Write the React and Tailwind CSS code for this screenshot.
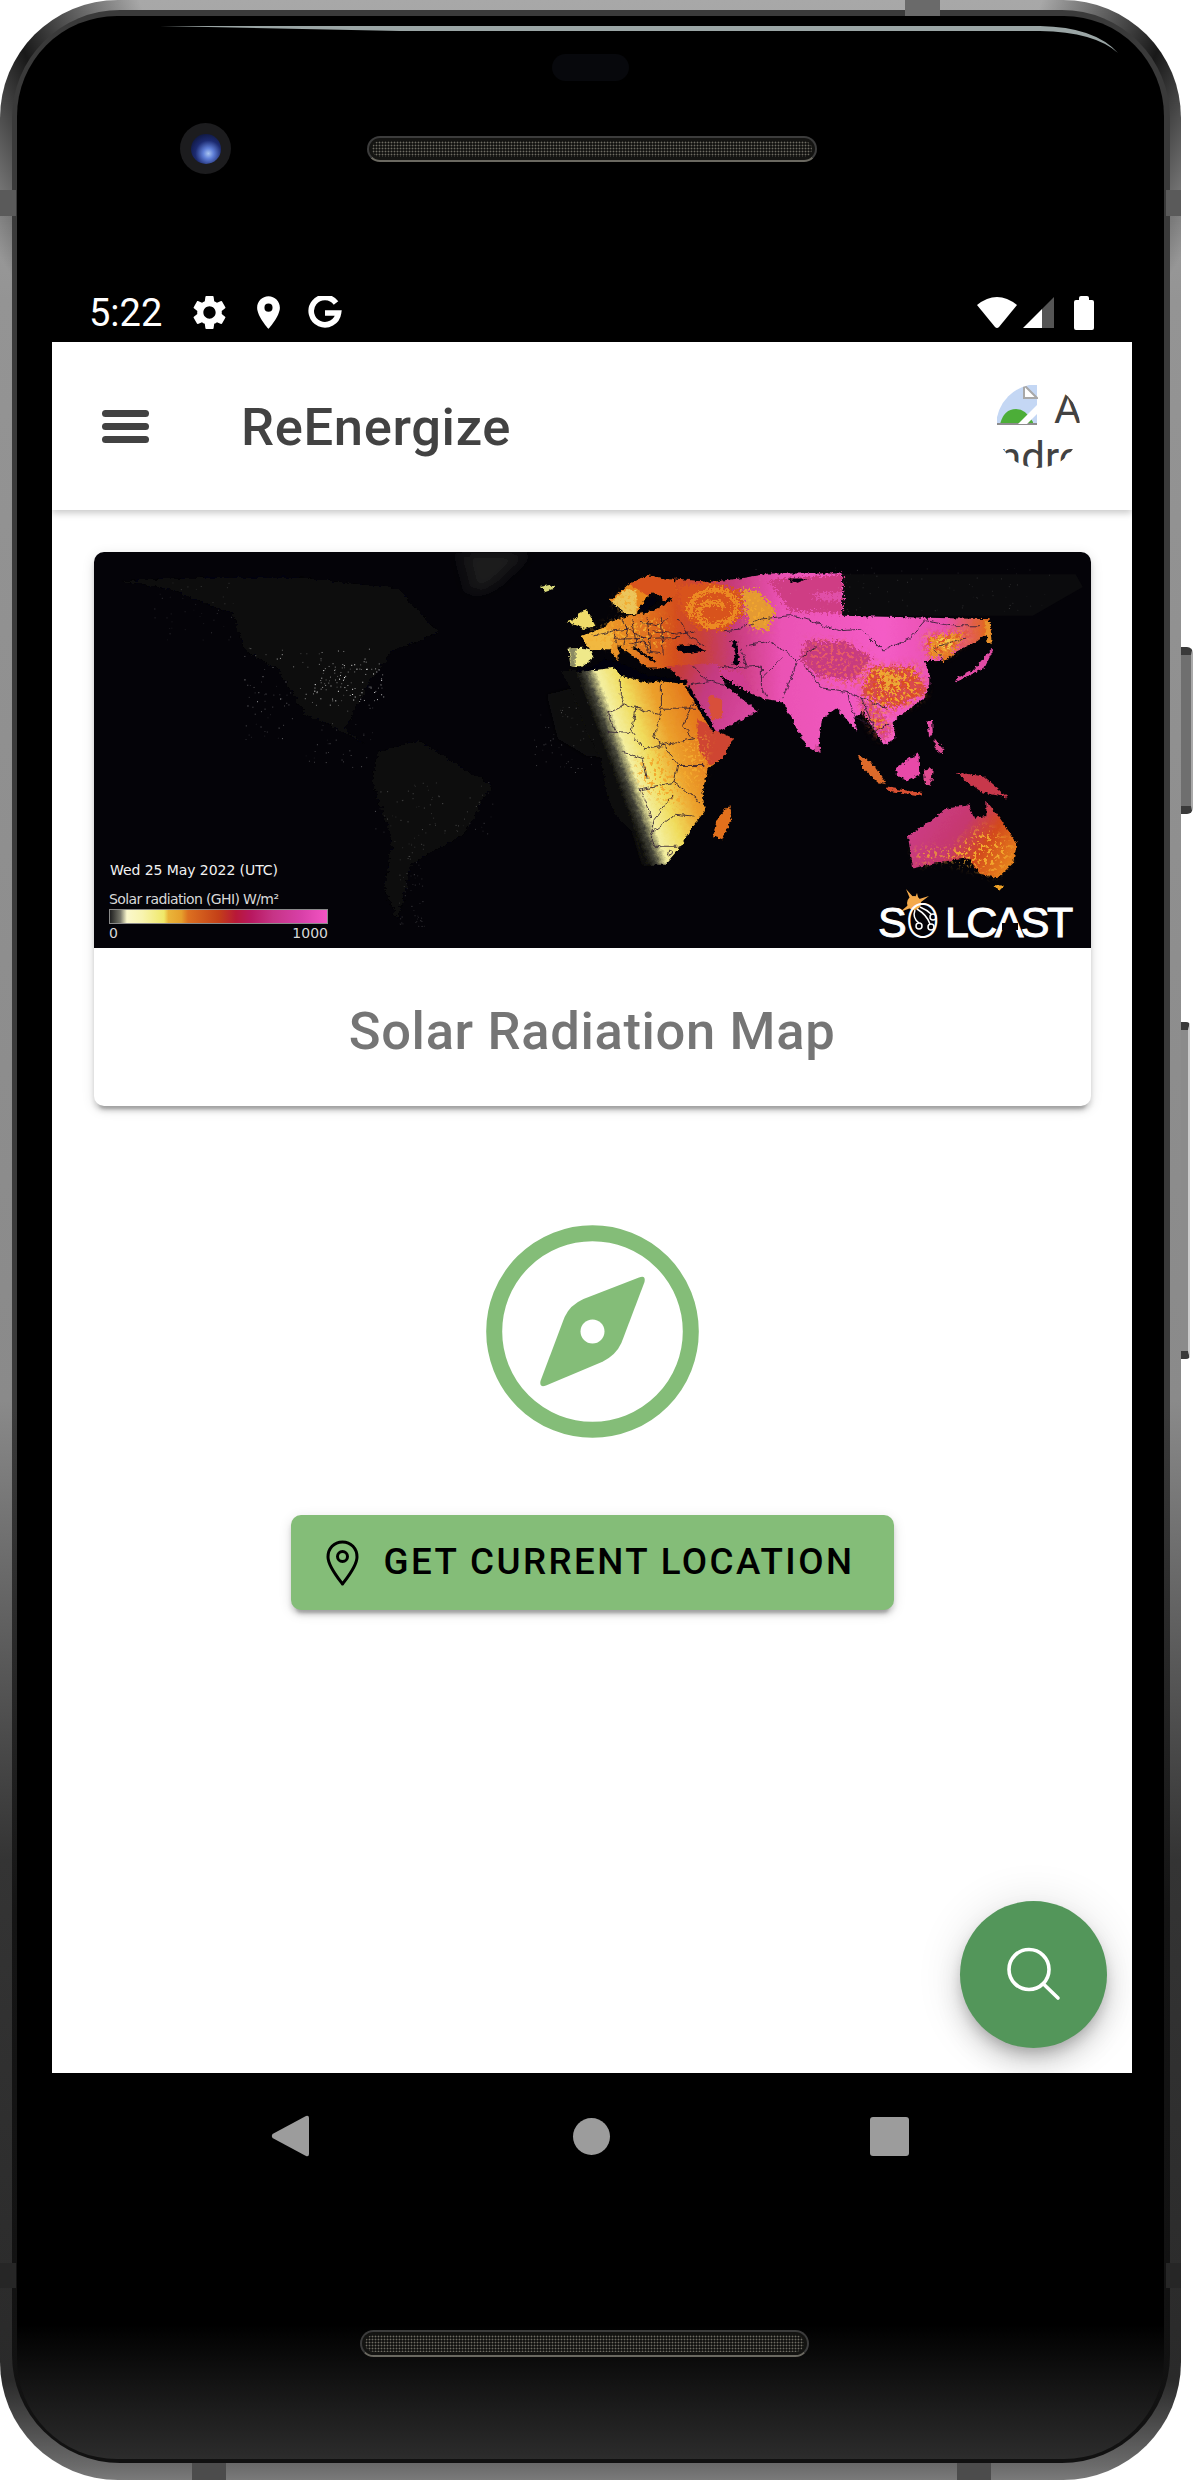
import React, { useMemo } from "react";
import { MdSettings, MdLocationOn } from "react-icons/md";

function rng(seed) {
  let s = seed;
  return () => {
    s = (s * 16807) % 2147483647;
    return (s - 1) / 2147483646;
  };
}

const EURASIA = "380,85 470,95 560,85 640,70 846,70 846,195 1240,205 1255,205 1265,240 1225,270 1150,310 1130,330 1075,330 1090,365 1090,400 1075,440 1010,490 990,510 995,560 965,578 930,520 905,480 880,500 890,540 830,470 790,500 778,600 745,580 710,510 680,450 625,442 590,425 540,392 505,365 495,340 420,350 360,352 300,352 270,322 220,282 220,330 190,290 140,295 140,255 115,255 170,235 205,208 320,180 370,150";
const AFRICA = "60,360 140,352 215,345 235,375 300,395 340,390 415,400 430,440 480,520 485,545 540,560 510,620 470,650 455,720 462,775 420,830 395,880 350,935 290,935 270,850 215,790 190,740 170,620 130,540 90,420";
const ARABIA = "355,345 495,335 520,405 585,458 610,478 490,545 480,510 420,420 410,395";
const AUS = "1030,850 1100,800 1135,770 1200,755 1215,795 1250,790 1250,745 1290,800 1335,870 1325,930 1280,975 1230,960 1200,915 1130,925 1045,945 1035,880";
const SCAND = "195,150 250,100 300,75 375,90 385,130 350,150 320,125 300,135 270,190 240,190 215,165";
const IBERIA = "80,293 120,290 140,295 150,320 115,350 85,345";

const BORDERS = [
  "225,385 225,430 240,460 190,485", "240,460 335,490", "340,395 340,470 335,490 320,560 345,580", "340,470 435,470",
  "270,465 255,540 290,590 345,580 430,560", "190,540 255,545", "230,600 290,620 300,680", "345,580 385,640 375,690 280,710 310,790",
  "385,640 460,640", "375,690 450,750", "370,730 320,800 310,840 380,785 430,790", "310,840 320,880 395,880",
  "510,240 560,235 620,205 700,195 760,210 840,240 900,235 960,300 1040,260 1080,210 1150,225 1230,225",
  "580,285 640,270 700,310 720,330 770,290", "500,345 540,350 620,345 620,410 635,440", "620,380 680,320", "680,440 710,360 720,335",
  "740,340 790,410 860,420 900,440 970,470", "420,400 480,390 520,400", "430,345 470,390", "205,240 250,235 290,260", "260,205 270,290",
  "300,200 310,300", "340,200 345,310", "210,265 390,260", "860,420 880,500 930,520", "900,440 940,540 975,520", "1130,330 1100,290 1190,265",
  "150,255 205,240 215,280", "230,205 245,240 235,280", "280,215 330,225 365,200", "290,260 300,300 335,305", "315,240 385,250 430,240",
  "390,205 420,260 460,285", "250,280 285,270 310,290", "560,290 580,345", "430,450 400,520 430,560", "190,485 215,540",
];

function WorldMap() {
  const dots = useMemo(() => {
    const r = rng(12345);
    const out = [];
    const add = (n, x0, x1, y0, y1, a) => {
      for (let i = 0; i < n; i++) {
        out.push({ x: x0 + r() * (x1 - x0), y: y0 + r() * (y1 - y0), o: a * (0.25 + r() * 0.75) });
      }
    };
    add(80, 150, 285, 95, 160, 0.65);
    add(30, 150, 200, 130, 190, 0.4);
    add(80, 220, 290, 110, 150, 1);
    add(40, 60, 140, 30, 90, 0.2);
    add(70, 280, 400, 230, 290, 0.3);
    add(60, 305, 330, 290, 375, 0.25);
    add(30, 210, 280, 170, 215, 0.35);
    add(90, 660, 960, 15, 60, 0.18);
    add(50, 440, 500, 150, 220, 0.3);
    return out;
  }, []);
  const B = "translate(446,-2) scale(.3571,.3367)";
  return (
    <svg viewBox="0 0 997 396" width="997" height="396" className="block" style={{ fontFamily: '"DejaVu Sans", sans-serif' }}>
      <defs>
        <filter id="rough" x="-5%" y="-5%" width="110%" height="110%">
          <feTurbulence type="fractalNoise" baseFrequency="0.09" numOctaves="4" seed="7" />
          <feDisplacementMap in="SourceGraphic" scale="14" xChannelSelector="R" yChannelSelector="G" />
        </filter>
        <filter id="rough2" x="-5%" y="-5%" width="110%" height="110%">
          <feTurbulence type="fractalNoise" baseFrequency="0.14" numOctaves="4" seed="21" />
          <feDisplacementMap in="SourceGraphic" scale="40" xChannelSelector="R" yChannelSelector="G" />
        </filter>
        <filter id="wig" x="-5%" y="-5%" width="110%" height="110%">
          <feTurbulence type="fractalNoise" baseFrequency="0.05" numOctaves="3" seed="5" />
          <feDisplacementMap in="SourceGraphic" scale="18" xChannelSelector="R" yChannelSelector="G" />
        </filter>
        <filter id="mottleY" x="0" y="0" width="1" height="1" colorInterpolationFilters="sRGB">
          <feTurbulence type="fractalNoise" baseFrequency="0.3" numOctaves="4" seed="3" />
          <feColorMatrix values="0 0 0 0 0.95  0 0 0 0 0.66  0 0 0 0 0.18  10 0 0 0 -5.5" />
        </filter>
        <filter id="mottleO" x="0" y="0" width="1" height="1" colorInterpolationFilters="sRGB">
          <feTurbulence type="fractalNoise" baseFrequency="0.24" numOctaves="4" seed="9" />
          <feColorMatrix values="0 0 0 0 0.86  0 0 0 0 0.30  0 0 0 0 0.14  10 0 0 0 -5" />
        </filter>
        <filter id="mottleR" x="0" y="0" width="1" height="1" colorInterpolationFilters="sRGB">
          <feTurbulence type="fractalNoise" baseFrequency="0.3" numOctaves="4" seed="11" />
          <feColorMatrix values="0 0 0 0 0.90  0 0 0 0 0.36  0 0 0 0 0.40  10 0 0 0 -5.3" />
        </filter>
        <filter id="blur6"><feGaussianBlur stdDeviation="6" /></filter>
        <filter id="blur14" x="-30%" y="-30%" width="160%" height="160%"><feGaussianBlur stdDeviation="14" /></filter>
        <linearGradient id="gEur" gradientUnits="userSpaceOnUse" x1="100" y1="0" x2="1250" y2="0">
          <stop offset="0" stopColor="#f2b03a" />
          <stop offset="0.12" stopColor="#e88a22" />
          <stop offset="0.24" stopColor="#d5501c" />
          <stop offset="0.31" stopColor="#c8403c" />
          <stop offset="0.38" stopColor="#c63a78" />
          <stop offset="0.5" stopColor="#ea52b4" />
          <stop offset="0.75" stopColor="#f45cc6" />
          <stop offset="0.9" stopColor="#e850ae" />
          <stop offset="1" stopColor="#e0681e" />
        </linearGradient>
        <linearGradient id="gAf" gradientUnits="userSpaceOnUse" x1="120" y1="420" x2="535" y2="275">
          <stop offset="0" stopColor="#0d0d0a" />
          <stop offset="0.06" stopColor="#46463a" />
          <stop offset="0.13" stopColor="#f4efa0" />
          <stop offset="0.26" stopColor="#f0dc5c" />
          <stop offset="0.42" stopColor="#eca02c" />
          <stop offset="0.62" stopColor="#e47a1c" />
          <stop offset="0.85" stopColor="#d4501c" />
          <stop offset="1" stopColor="#c23a3c" />
        </linearGradient>
        <linearGradient id="gAr" gradientUnits="userSpaceOnUse" x1="380" y1="380" x2="620" y2="480">
          <stop offset="0" stopColor="#c43a3a" />
          <stop offset="0.35" stopColor="#c43a80" />
          <stop offset="1" stopColor="#dc4aa6" />
        </linearGradient>
        <linearGradient id="gAu" gradientUnits="userSpaceOnUse" x1="1060" y1="790" x2="1320" y2="960">
          <stop offset="0" stopColor="#cc3c86" />
          <stop offset="0.4" stopColor="#c6386e" />
          <stop offset="0.65" stopColor="#d2481e" />
          <stop offset="1" stopColor="#ea8c1e" />
        </linearGradient>
        <linearGradient id="gBar">
          <stop offset="0" stopColor="#1c1c1c" />
          <stop offset="0.05" stopColor="#77776a" />
          <stop offset="0.08" stopColor="#fbf8cc" />
          <stop offset="0.15" stopColor="#f8f4b0" />
          <stop offset="0.25" stopColor="#f0e868" />
          <stop offset="0.27" stopColor="#eab53a" />
          <stop offset="0.33" stopColor="#e6a02c" />
          <stop offset="0.36" stopColor="#dc7020" />
          <stop offset="0.5" stopColor="#c44018" />
          <stop offset="0.58" stopColor="#b81838" />
          <stop offset="0.65" stopColor="#b81860" />
          <stop offset="0.75" stopColor="#c63486" />
          <stop offset="0.88" stopColor="#d840a8" />
          <stop offset="1" stopColor="#f455c4" />
        </linearGradient>
        <mask id="mChina" maskUnits="userSpaceOnUse" x="0" y="0" width="997" height="396">
          <g transform={B} fill="#fff" filter="url(#blur14)">
            <polygon points="900,350 1060,345 1075,430 985,480 915,440" />
            <polygon points="1075,255 1215,240 1140,305 1085,315" />
            <polygon points="900,450 950,480 980,540 950,555 925,505" />
          </g>
        </mask>
        <mask id="mRuss" maskUnits="userSpaceOnUse" x="0" y="0" width="997" height="396">
          <g transform={B} fill="#fff" filter="url(#blur14)">
            <polygon points="560,115 640,170 640,235 590,235" />
            <polygon points="130,255 210,215 340,200 370,250 335,290 250,285 190,280" />
            <polygon points="210,160 245,120 265,130 260,180 240,185" />
            <polygon points="290,620 470,545 460,650 400,770 310,730 260,650" />
            <polygon points="1240,820 1320,875 1310,925 1270,965 1225,945 1130,915 1060,930 1050,890 1150,890" />
          </g>
        </mask>
        <mask id="mTibet" maskUnits="userSpaceOnUse" x="0" y="0" width="997" height="396">
          <g transform={B} fill="#fff" filter="url(#blur14)">
            <polygon points="745,270 850,270 930,320 900,410 800,395 745,335" />
            <polygon points="890,440 950,475 975,535 955,555 925,505" />
          </g>
        </mask>
      </defs>

      <rect width="997" height="396" fill="#040308" />

      <g transform="translate(-14,-12) scale(.6633,.3717)" fill="#08080a" filter="url(#rough)">
        <polygon points="60,110 190,100 330,100 480,130 540,250 470,300 430,400 400,510 430,550 380,500 340,470 300,350 250,300 230,200 130,130" />
        <polygon points="450,570 510,540 620,660 580,790 500,870 480,1020 460,950 470,800 440,650" />
      </g>
      <g transform="translate(-14,-12) scale(.6633,.3717)" filter="url(#blur14)">
        <polygon points="575,35 675,35 625,120 592,150" fill="#1c1c1c" />
      </g>

      <g transform={B}>
        <polygon points="846,72 1500,72 1520,110 1380,195 1240,195 846,195" fill="#0b0b0d" />
        <polygon points="20,430 130,400 190,560 230,620 130,610 50,560" fill="#111110" filter="url(#blur6)" />
        <polygon points="240,760 300,780 320,930 290,935" fill="#1b1b18" filter="url(#blur6)" />

        <g filter="url(#rough)">
          <polygon points={EURASIA} fill="url(#gEur)" />
          <polygon points={SCAND} fill="#e8871f" />
          <polygon points="250,100 300,75 375,90 385,130 350,150 320,125 300,135" fill="#d8521c" />
          <polygon points="200,155 240,115 270,120 270,190 240,190" fill="#ecc55a" />
          <polygon points="72,215 100,205 105,190 130,175 155,225 125,235 95,222" fill="#efdc6a" />
          <polygon points="115,255 170,235 205,240 200,295 140,295" fill="#f1b840" />
          <polygon points={IBERIA} fill="#efe98a" />
          <polygon points="85,293 100,293 100,345 85,345" fill="#8a8a64" />
          <polygon points="0,110 30,103 40,115 15,125" fill="#d8d87a" />
        </g>

        <g filter="url(#rough2)">
          <polygon points="385,110 480,95 560,120 570,190 520,240 440,235 395,180" fill="#d8521c" />
          <path d="M425 200 Q405 135 480 118 Q555 120 550 180 Q530 232 465 222 Q430 200 455 165 Q490 140 515 170" fill="none" stroke="#ec8a24" strokeWidth="16" />
          <polygon points="560,115 610,120 660,180 640,240 590,230" fill="#e59a30" />
          <polygon points="640,90 846,72 846,190 700,180" fill="#cf3d84" />
          <polygon points="760,130 846,125 846,150 790,150" fill="#e050a8" />
          <polygon points="745,270 850,270 930,320 880,385 780,375 730,325" fill="#c83a80" />
          <polygon points="930,345 1040,350 1085,420 990,470 900,430" fill="#d8484e" />
          <polygon points="945,350 1012,372 1003,425 955,412" fill="#eaa838" />
          <polygon points="1090,260 1190,245 1150,310 1090,320" fill="#e88a2e" />
          <polygon points="1110,265 1165,260 1140,300" fill="#f2c84c" />
          <polygon points="880,430 950,470 985,540 960,570 925,510" fill="#dc4aa0" />
          <polygon points="470,345 560,360 600,425 520,385" fill="#d03e90" />
        </g>

        <g filter="url(#rough)">
          <polygon points={AFRICA} fill="url(#gAf)" />
          <polygon points={ARABIA} fill="url(#gAr)" />
          <polygon points="470,430 510,440 510,500 480,505" fill="#d8503a" />
          <polygon points="440,500 490,535 540,560 510,620 475,640 445,590" fill="#cf4530" />
          <polygon points={AUS} fill="url(#gAu)" />
          <polygon points="530,757 538,790 510,860 485,850 495,800" fill="#e2701c" />
          <polygon points="1270,995 1300,997 1285,1013" fill="#eda026" />
          <polygon points="890,610 925,625 970,695 945,690 905,650" fill="#dc6a2c" />
          <polygon points="995,650 1060,600 1062,670 1030,685 1000,670" fill="#e84aa8" />
          <polygon points="970,705 1070,722 1065,730 975,715" fill="#d85030" />
          <polygon points="1075,655 1100,650 1095,700 1078,695" fill="#e04c90" />
          <polygon points="1085,505 1098,505 1100,545 1090,560" fill="#e850a8" />
          <polygon points="1105,560 1130,590 1125,605 1105,590" fill="#d84890" />
          <polygon points="1165,660 1240,672 1310,735 1240,720 1195,690" fill="#c8384c" />
          <polygon points="1160,385 1215,355 1250,310 1272,290 1245,350 1170,390" fill="#e04ca4" />
          <polygon points="1245,208 1260,215 1265,280 1250,270" fill="#e8902a" />
          <polygon points="770,580 785,585 782,602 770,598" fill="#d84a9c" />
          <polygon points="1130,300 1160,310 1125,335" fill="#e87c28" />
        </g>
      </g>

      <g mask="url(#mTibet)"><rect x="690" y="60" width="130" height="150" filter="url(#mottleR)" /></g>
      <g mask="url(#mChina)"><rect x="720" y="60" width="230" height="150" filter="url(#mottleO)" /></g>
      <g mask="url(#mChina)"><rect x="720" y="60" width="230" height="150" filter="url(#mottleY)" /></g>
      <g mask="url(#mRuss)"><rect x="470" y="20" width="470" height="320" filter="url(#mottleY)" /></g>

      <g transform={B}>
        <g fill="#040308" filter="url(#rough)">
          <polygon points="100,350 150,345 180,322 230,338 275,358 300,372 410,385 415,395 300,385 225,375 210,350 140,358 110,362" />
          <polygon points="258,290 320,335 326,330 265,288" />
          <polygon points="380,285 430,280 466,298 420,306 390,302" />
          <polygon points="535,268 552,272 558,340 538,340 548,310" />
          <polygon points="405,405 418,405 492,538 484,542" />
          <polygon points="276,172 300,145 316,135 335,150 316,165 290,190" />
          <polygon points="690,85 750,85 720,98" />
        </g>
        <g fill="none" stroke="#2a1a30" strokeWidth="2.4" strokeLinejoin="round" filter="url(#wig)">
          {BORDERS.map((b, i) => (
            <polyline key={i} points={b} />
          ))}
          <circle cx="366" cy="900" r="8" />
        </g>
      </g>

      {dots.map((d, i) => (
        <rect key={i} x={d.x} y={d.y} width="1" height="1" fill="#fff" opacity={d.o} />
      ))}

      <text x="16" y="323" fill="#f2f2f2" fontSize="14" textLength="168">Wed 25 May 2022 (UTC)</text>
      <text x="15" y="352" fill="#d8d8d8" fontSize="14" textLength="170">Solar radiation (GHI) W/m²</text>
      <rect x="15.5" y="357.5" width="218" height="14" fill="url(#gBar)" stroke="#8a8a8a" strokeWidth="1" />
      <text x="15" y="386" fill="#d8d8d8" fontSize="14">0</text>
      <text x="234" y="386" fill="#d8d8d8" fontSize="14" textAnchor="end">1000</text>

      <circle cx="820" cy="351" r="7" fill="#f4aa4c" />
      <path d="M812 337 L821 347 L817 349 Z M823 341 L825 349 L820 348 Z M835 344 L823 353 L822 348 Z M806 360 L819 349 L822 354 Z" fill="#f4aa4c" />
      <g fill="#fff" stroke="#fff" strokeWidth="1" style={{ fontFamily: '"Liberation Sans", sans-serif' }} fontSize="43">
        <text y="385">
          <tspan x="784">S</tspan>
          <tspan x="811" y="386" fontSize="47" fontWeight="200" strokeWidth="0" style={{ fontFamily: "Inter, sans-serif" }}>O</tspan>
          <tspan x="851" y="385" letterSpacing="-2.6">LCAST</tspan>
        </text>
      </g>
      <rect x="908" y="371" width="16" height="7" fill="#040308" />
      <g fill="none" stroke="#fff" strokeWidth="1.5">
        <path d="M821 358 Q818 366 825 371" />
        <circle cx="825" cy="374" r="3" />
        <path d="M823 357 Q833 363 836 372" />
        <circle cx="837" cy="375" r="3" />
        <path d="M826 355 Q833 358 837 362" />
        <circle cx="839" cy="365" r="3" />
      </g>
    </svg>
  );
}

function Speaker({ className }) {
  return (
    <div className={`rounded-full border-[2px] border-[#3c3c3c] border-b-[#6a6860] bg-[#141412] p-[3px] ${className}`}>
      <div className="h-full rounded-full bg-[radial-gradient(#6e6c62_0.8px,transparent_1.1px)] bg-[length:3px_3px]" />
    </div>
  );
}

function BrokenImage() {
  return (
    <svg width="42" height="42" viewBox="0 0 42 42" className="-ml-[2px] mr-[16px] inline-block align-top">
      <rect x="1" y="1" width="40" height="39" fill="#c4d7f4" />
      <path d="M4 40 Q8 25 20 25 Q30 25 37 38 L37 40 Z" fill="#4cae38" />
      <path d="M1 40 H41" stroke="#8c8c8c" strokeWidth="2" />
      <path d="M41 21 L22 40 L31 40 L41 30 Z" fill="#fff" />
      <path d="M28 1 L41 14 L28 14 Z" fill="#fff" stroke="#a8a8a8" strokeWidth="2" />
    </svg>
  );
}

export default function App() {
  return (
    <div className="relative h-[2480px] w-[1194px] overflow-hidden bg-white" style={{ fontFamily: "Roboto, sans-serif" }}>
      {/* side buttons */}
      <div className="absolute left-[1175px] top-[647px] h-[167px] w-[18px] rounded-r-[6px] border-y-[8px] border-r-[2px] border-y-[#3a3a3a] border-r-[#aaa] bg-[#6f6f6f]" />
      <div className="absolute left-[1175px] top-[1022px] h-[337px] w-[15px] rounded-r-[4px] border-y-[8px] border-r-[2px] border-y-[#3a3a3a] border-r-[#ccc] bg-[#8b8b8b]" />

      {/* phone body */}
      <div className="relative h-[2480px] w-[1181px] rounded-[118px] bg-[conic-gradient(transparent_0deg,transparent_20deg,rgba(0,0,0,0.85)_25.5deg,transparent_31deg,transparent_329deg,rgba(0,0,0,0.85)_334.5deg,transparent_340deg),linear-gradient(to_bottom,#a8a8a8_0,#949494_300px,#8a8a8a_1400px,#343434_1860px,#2a2a2a_2380px,#6a6a6a_2465px,#7a7a7a_2480px)] pb-[17px] pl-[12px] pr-[11px] pt-[10px]">
        <div className="h-full rounded-[108px] bg-[linear-gradient(to_bottom,#3a3a3a_0,#3a3a3a_1400px,#141414_1900px,#111_100%)] pb-[4px] pl-[5px] pr-[6px] pt-[6px]">
          <div className="flex h-full flex-col rounded-[100px] bg-[linear-gradient(to_bottom,#000_0,#000_94.5%,#2c2c2c_100%)] pl-[35px]">
            {/* top bezel */}
            <div className="flex h-[326px] w-[1080px] flex-col">
              <div className="ml-[500px] mt-[38px] h-[27px] w-[77px] rounded-full bg-[#07080c]" />
              <div className="ml-[128px] mt-[42px] flex items-center">
                <div className="flex h-[51px] w-[51px] items-center justify-center rounded-full bg-[#1c1c1e]">
                  <div className="h-[30px] w-[30px] rounded-full bg-[radial-gradient(circle_at_58%_65%,#a8c4f0_0,#5f7fd8_20%,#1c2a70_50%,#060a1c_100%)]" />
                </div>
                <Speaker className="ml-[136px] h-[26px] w-[450px]" />
              </div>
              <div className="mt-[118px] flex items-center pl-[37px] text-white">
                <span className="text-[38px] leading-[34px]">5:22</span>
                <MdSettings size={41} className="ml-[27px]" />
                <MdLocationOn size={39} className="ml-[19px]" />
                <svg width="34" height="34" viewBox="0 0 34 34" className="ml-[20px]">
                  <path d="M28 7 A13.7 13.7 0 1 0 30.5 17 H17" fill="none" stroke="#fff" strokeWidth="5.6" />
                </svg>
                <div className="flex-1" />
                <svg width="42" height="33" viewBox="0 0 42 33">
                  <path d="M1 9 Q21 -7 41 9 L23 31 Q21 33 19 31 Z" fill="#fff" />
                </svg>
                <svg width="33" height="33" viewBox="0 0 33 33" className="ml-[4px]">
                  <path d="M1 32 L20 13 V32 Z" fill="#fff" />
                  <path d="M20 13 L32 1 V32 H20 Z" fill="#555" />
                </svg>
                <svg width="20" height="34" viewBox="0 0 20 34" className="ml-[19px] mr-[38px]">
                  <path d="M5 4 V2 Q5 0 7 0 H13 Q15 0 15 2 V4 H18 Q20 4 20 6 V32 Q20 34 18 34 H2 Q0 34 0 32 V6 Q0 4 2 4 Z" fill="#fff" />
                </svg>
              </div>
            </div>

            {/* screen */}
            <div className="relative flex h-[1731px] w-[1080px] flex-col items-center bg-white">
              <div className="flex h-[168px] w-full shrink-0 items-center shadow-[0_3px_7px_rgba(0,0,0,0.22)]">
                <div className="ml-[50px] flex w-[47px] flex-col gap-[6px]">
                  <div className="h-[7px] rounded-full bg-[#424242]" />
                  <div className="h-[7px] rounded-full bg-[#424242]" />
                  <div className="h-[7px] rounded-full bg-[#424242]" />
                </div>
                <div className="ml-[92px] pt-[2px] text-[52.5px] font-medium leading-none tracking-[0.0125em] text-[#424242]">ReEnergize</div>
                <div className="ml-auto mr-[52px] h-[84px] w-[84px] overflow-hidden rounded-full text-[42px] leading-[49px] text-[#424242]">
                  <div className="ml-[2px] w-[88px] [word-break:break-all]">
                    <BrokenImage />Android
                  </div>
                </div>
              </div>

              <div className="mt-[42px] h-[554px] w-[997px] shrink-0 rounded-[10px] bg-white shadow-[0_8px_3px_-5px_rgba(0,0,0,0.2),0_5px_5px_0_rgba(0,0,0,0.14),0_3px_13px_0_rgba(0,0,0,0.12)]">
                <div className="h-[396px] overflow-hidden rounded-t-[10px]">
                  <WorldMap />
                </div>
                <div className="flex h-[158px] items-center justify-center pt-[8px] text-[52.5px] font-medium leading-none tracking-[0.0125em] text-[#757575]">
                  Solar Radiation Map
                </div>
              </div>

              <svg width="213" height="213" viewBox="0 0 213 213" className="mt-[119px] shrink-0">
                <circle cx="106.5" cy="106.5" r="98.3" fill="none" stroke="#84bd78" strokeWidth="16" />
                <path d="M97.5 74 L153 52.5 Q160 50 158.5 57 L135.4 118 Q130 130 116.5 136.7 L60 160.5 Q53 163 54.5 156 L78.6 92 Q84 80 97.5 74 Z" fill="#84bd78" />
                <circle cx="106.5" cy="106.5" r="12" fill="#fff" />
              </svg>

              <div className="mt-[77px] flex h-[95px] w-[603px] shrink-0 items-center rounded-[10px] bg-[#84bd78] pl-[35px] text-[36.75px] font-medium leading-none tracking-[0.066em] text-black shadow-[0_8px_3px_-5px_rgba(0,0,0,0.2),0_5px_5px_0_rgba(0,0,0,0.14),0_3px_13px_0_rgba(0,0,0,0.12)]">
                <svg width="33" height="46" viewBox="0 0 33 46" className="mr-[25px] shrink-0">
                  <path d="M16.5 2 C8 2 2 8.5 2 17 C2 26 12 38 16.5 44 C21 38 31 26 31 17 C31 8.5 25 2 16.5 2 Z" fill="none" stroke="#000" strokeWidth="3" strokeLinejoin="round" />
                  <circle cx="16.5" cy="16.5" r="5" fill="none" stroke="#000" strokeWidth="3" />
                </svg>
                GET CURRENT LOCATION
              </div>

              <div className="absolute bottom-[25px] right-[25px] flex h-[147px] w-[147px] items-center justify-center rounded-full bg-[#53965a] shadow-[0_8px_13px_-3px_rgba(0,0,0,0.2),0_16px_26px_0_rgba(0,0,0,0.14),0_3px_47px_0_rgba(0,0,0,0.12)]">
                <svg width="55" height="55" viewBox="0 0 55 55" fill="none" stroke="#fff" strokeWidth="3.6" strokeLinecap="round">
                  <circle cx="23" cy="22.5" r="20" />
                  <path d="M38 37.5 L52 51" />
                </svg>
              </div>
            </div>

            {/* bottom bezel */}
            <div className="flex w-[1080px] flex-col">
              <div className="mt-[42px] flex items-center">
                <svg width="38" height="42" viewBox="0 0 38 42" className="ml-[219px]">
                  <path d="M35 1 Q38 0 38 3 V39 Q38 42 35 41 L1.5 23 Q0 21 1.5 19 Z" fill="#9c9c9c" />
                </svg>
                <div className="ml-[264px] h-[37px] w-[37px] rounded-full bg-[#9c9c9c]" />
                <div className="ml-[260px] h-[39px] w-[39px] rounded-[3px] bg-[#9c9c9c]" />
              </div>
              <Speaker className="ml-[308px] mt-[173px] h-[27px] w-[449px]" />
            </div>
          </div>
        </div>

        {/* metal details */}
        <svg width="1181" height="60" viewBox="0 0 1181 60" className="pointer-events-none absolute left-0 top-0">
          <path d="M160 26 L1040 26 Q1095 27 1118 53 Q1095 32 1040 31 L400 31 Z" fill="#9aa5a5" />
        </svg>
        <div className="absolute left-0 top-[190px] h-[26px] w-[16px] bg-[#5a5a5a]" />
        <div className="absolute left-[1166px] top-[190px] h-[26px] w-[15px] bg-[#5a5a5a]" />
        <div className="absolute left-[905px] top-0 h-[16px] w-[35px] bg-[#6a6a6a]" />
        <div className="absolute bottom-0 left-[192px] h-[17px] w-[34px] bg-[#4c4c4c]" />
        <div className="absolute bottom-0 left-[957px] h-[17px] w-[34px] bg-[#4c4c4c]" />
        <div className="absolute left-[1166px] top-[2263px] h-[25px] w-[15px] bg-[#262626]" />
        <div className="absolute left-0 top-[2263px] h-[25px] w-[16px] bg-[#262626]" />
      </div>
    </div>
  );
}
